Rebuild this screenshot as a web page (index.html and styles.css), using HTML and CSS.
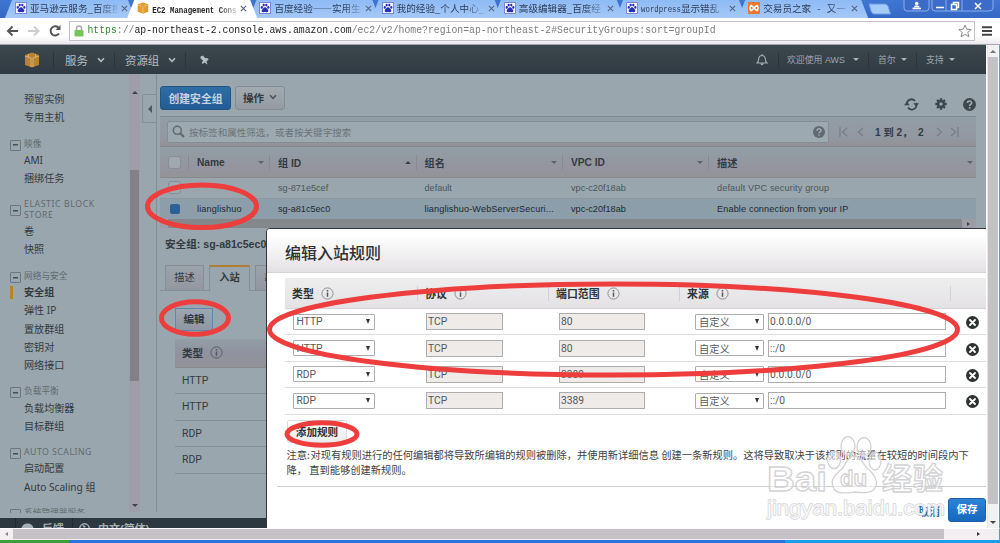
FILE: index.html
```html
<!DOCTYPE html>
<html lang="zh-CN">
<head>
<meta charset="utf-8">
<title>EC2 Management Console</title>
<link rel="stylesheet" href="styles.css">
</head>
<body>
<svg class="defs" width="0" height="0">
  <symbol id="paw" viewBox="0 0 12 12"><rect width="12" height="12" fill="#7f86d8"/><rect x="1" y="1" width="10" height="10" fill="#f4f6ff"/><g fill="#2530b8"><ellipse cx="2.8" cy="5.4" rx="1.1" ry="1.4"/><ellipse cx="4.7" cy="3.1" rx="1.1" ry="1.4"/><ellipse cx="7.3" cy="3.1" rx="1.1" ry="1.4"/><ellipse cx="9.3" cy="5.4" rx="1.1" ry="1.4"/><path d="M6 5.2C7.5 5.2 7.6 6.6 8.8 7.6C9.8 8.6 9.4 10.3 7.8 10.2L6 10L4.2 10.2C2.6 10.3 2.2 8.6 3.2 7.6C4.4 6.6 4.5 5.2 6 5.2Z"/></g></symbol>
  <symbol id="cube" viewBox="0 0 16 16"><path d="M8 .5L15 3V13L8 15.5L1 13V3Z" fill="currentColor"/><path d="M1 4.2L7 5.8V15M15 4.2L9 5.8V15M4.5 1.8V5M11.5 1.8V5" stroke="#fff" stroke-opacity=".4" fill="none" stroke-width=".9"/></symbol>
  <symbol id="info" viewBox="0 0 14 14"><circle cx="7" cy="7" r="6" fill="none" stroke="currentColor" stroke-width="1"/><path d="M7 6V10.4M7 3.3V4.8" stroke="#55585b" stroke-width="1.6"/></symbol>
  <symbol id="help" viewBox="0 0 14 14"><circle cx="7" cy="7" r="7" fill="currentColor"/><path d="M4.8 5.4C4.8 2.5 9.4 2.6 9.3 5.3C9.2 6.8 7.1 6.8 7.1 8.5M7.1 9.8V11.5" fill="none" stroke="#a2adb3" stroke-width="1.7"/></symbol>
  <symbol id="del" viewBox="0 0 14 14"><circle cx="7" cy="7" r="7" fill="#303234"/><path d="M4.3 4.3L9.7 9.7M9.7 4.3L4.3 9.7" stroke="#fff" stroke-width="2" stroke-linecap="round"/></symbol>
  <symbol id="chev" viewBox="0 0 8 6"><path d="M1 1.2L4 4.4L7 1.2" fill="none" stroke="currentColor" stroke-width="1.6"/></symbol>
</svg>

<header class="tabs">
  <div class="tab"><svg class="fav"><use href="#paw"/></svg><span class="tab-text">亚马逊云服务_百度搜</span><svg class="x" viewBox="0 0 8 8"><path d="M1 1L7 7M7 1L1 7"/></svg></div>
  <div class="tab active"><svg class="fav"><use href="#cube"/></svg><span class="tab-text"><b>EC2 Management Cons</b></span><svg class="x" viewBox="0 0 8 8"><path d="M1 1L7 7M7 1L1 7"/></svg></div>
  <div class="tab"><svg class="fav"><use href="#paw"/></svg><span class="tab-text">百度经验——实用生</span><svg class="x" viewBox="0 0 8 8"><path d="M1 1L7 7M7 1L1 7"/></svg></div>
  <div class="tab"><svg class="fav"><use href="#paw"/></svg><span class="tab-text">我的经验_个人中心_</span><svg class="x" viewBox="0 0 8 8"><path d="M1 1L7 7M7 1L1 7"/></svg></div>
  <div class="tab"><svg class="fav"><use href="#paw"/></svg><span class="tab-text">高级编辑器_百度经</span><svg class="x" viewBox="0 0 8 8"><path d="M1 1L7 7M7 1L1 7"/></svg></div>
  <div class="tab"><svg class="fav"><use href="#paw"/></svg><span class="tab-text"><i>wordpress</i>显示错乱</span><svg class="x" viewBox="0 0 8 8"><path d="M1 1L7 7M7 1L1 7"/></svg></div>
  <div class="tab"><svg class="fav" viewBox="0 0 12 12"><rect width="12" height="12" rx="1" fill="#e8762f"/><path d="M3 3L9 9M9 3L3 9M3 3C1.5 6 1.5 6 3 9M9 3C10.5 6 10.5 6 9 9" stroke="#fff" stroke-width="1.6" fill="none"/></svg><span class="tab-text wide">交易员之家 - 又一</span><svg class="x" viewBox="0 0 8 8"><path d="M1 1L7 7M7 1L1 7"/></svg></div>
  <svg class="newtab" viewBox="0 0 24 12"><path d="M1 1H17Q19 1 20 3L22.500 11H6Q4 11 3 8Z" fill="#a5cbf8" stroke="#6b9be6"/></svg>
  <svg class="winbtns" viewBox="0 0 92 14"><path d="M1 0V8Q1 11 4 11H23Q26 11 26 8V0M29 0V8Q29 11 32 11H86Q90 11 90 8V0M43 0V11M59 0V11" fill="#3d6bc9" stroke="#8badea"/><g stroke="#fff" fill="none" stroke-width="1.5"><path d="M9.500 8.500H18M33 7.500H41M72 3L78 9M78 3L72 9"/><path d="M48.500 4.500H53.500V9.500H48.500ZM50.500 4V2.500H55.500V7.500H54"/></g><circle cx="13.700" cy="3.500" r="1.800" fill="#fff"/><path d="M10.500 7.500H17L15.500 5.500H12Z" fill="#fff"/></svg>
</header>

<div class="toolbar">
  <svg class="nav" viewBox="0 0 64 20"><g fill="none" stroke-width="2"><path d="M18 10H8M12.500 5.500L8 10L12.500 14.500" stroke="#555"/><path d="M28 10H38M34 5.500L38.500 10L34 14.500" stroke="#cfcdd2"/><path d="M59 12.500A4.600 4.600 0 1 1 58.800 7" stroke="#555"/></g><path d="M60.500 4V9H55.500Z" fill="#555"/></svg>
  <div class="omnibox">
    <svg class="lock" viewBox="0 0 10 12"><path d="M2.500 6V3.500Q2.500 1 5 1T7.500 3.500V6" fill="none" stroke="#a8adab" stroke-width="1.500"/><rect x=".5" y="5" width="9" height="6.500" rx="1" fill="#76c65d"/></svg>
    <span class="url"><em>https</em>://<strong>ap-northeast-2.console.aws.amazon.com</strong>/ec2/v2/home?region=ap-northeast-2#SecurityGroups:sort=groupId</span>
    <svg class="star" viewBox="0 0 14 14"><path d="M7 1L8.700 5.200L13.200 5.500L9.800 8.400L10.900 12.800L7 10.400L3.100 12.800L4.200 8.400L.8 5.500L5.300 5.200Z" fill="#fff" stroke="#8a8a8a"/></svg>
  </div>
  <svg class="menu" viewBox="0 0 10 10"><path d="M0 1.200H10M0 5H10M0 8.800H10" stroke="#444" stroke-width="2"/></svg>
</div>

<div class="view">
  <div class="page">
    <nav class="aws">
      <svg class="logo"><use href="#cube"/></svg>
      <div class="ni n1">服务 <svg><use href="#chev"/></svg></div>
      <div class="ni n2">资源组 <svg><use href="#chev"/></svg></div>
      <div class="ni n3"><svg class="pin" viewBox="0 0 10 10"><path d="M1.500 1.500L4 .5L6 3L9 3.200L9.500 5L7.500 6L8.500 9.500L5.500 7.500L3.800 9L2.800 7.800L4 5.500L1.500 3.500Z" fill="#b4bdc3"/></svg></div>
      <svg class="bell" viewBox="0 0 12 13"><path d="M1 10H11Q9.500 9 9.300 6Q9 2.500 6 2.500T2.700 6Q2.500 9 1 10ZM4.800 10.500Q6 13 7.200 10.500M6 1V2.500" fill="none" stroke="#a3acb2" stroke-width="1.100"/></svg>
      <div class="ni s n4">欢迎使用 AWS<i class="dn"></i></div>
      <div class="ni s n5">首尔<i class="dn"></i></div>
      <div class="ni s n6">支持<i class="dn"></i></div>
    </nav>
    <div class="body">
      <aside class="side">
        <div class="si">预留实例</div><div class="si">专用主机</div>
        <div class="sh">映像</div>
        <div class="si">AMI</div><div class="si">捆绑任务</div>
        <div class="sh two">ELASTIC BLOCK<br>STORE</div>
        <div class="si">卷</div><div class="si">快照</div>
        <div class="sh">网络与安全</div>
        <div class="si cur">安全组</div><div class="si">弹性 IP</div><div class="si">置放群组</div><div class="si">密钥对</div><div class="si">网络接口</div>
        <div class="sh">负载平衡</div>
        <div class="si">负载均衡器</div><div class="si">目标群组</div>
        <div class="sh lat">AUTO SCALING</div>
        <div class="si">启动配置</div><div class="si">Auto Scaling 组</div>
        <div class="sh last">系统管理器服务</div>
      </aside>
      <div class="sbar"><i class="up"></i><div class="thumb"></div><i class="dn"></i></div>
      <div class="gutter"><div class="fold"><i></i></div></div>
      <main class="main">
        <div class="actions">
          <div class="btn blue create">创建安全组</div>
          <div class="btn ops">操作 <svg class="opchev"><use href="#chev"/></svg></div>
          <div class="tools">
            <svg width="15" height="14" viewBox="0 0 15 14"><path d="M3 8A4.600 4.600 0 0 1 11 4M12 6A4.600 4.600 0 0 1 4 10.500" fill="none" stroke="#3d474d" stroke-width="1.800"/><path d="M0 8.200L2.800 4.800L5.800 8.200ZM9.200 6.200L12.200 9.600L15 6.200Z" fill="#3d474d"/></svg>
            <svg width="12" height="12" viewBox="0 0 12 12"><circle cx="6" cy="6" r="3" fill="none" stroke="#3d474d" stroke-width="2.600"/><path d="M6 .3V2M6 10V11.700M.3 6H2M10 6H11.700M2 2L3.200 3.200M8.800 8.800L10 10M10 2L8.800 3.200M2 10L3.200 8.800" stroke="#3d474d" stroke-width="2.400"/></svg>
            <svg class="hb" width="13" height="13"><use href="#help"/></svg>
          </div>
        </div>
        <div class="filter">
          <div class="search"><svg class="mag" viewBox="0 0 13 13"><circle cx="5.300" cy="5.300" r="4" fill="none" stroke="#616b71" stroke-width="1.600"/><path d="M8.300 8.300L12 12" stroke="#616b71" stroke-width="2.400"/></svg><span>按标签和属性筛选，或者按关键字搜索</span><svg class="hs" width="12" height="12"><use href="#help"/></svg></div>
          <svg class="pg" viewBox="0 0 24 10"><path d="M1 0V10M8 1L3.500 5L8 9M24 1L19.500 5L24 9" fill="none" stroke="#737e85" stroke-width="1.200"/></svg>
          <span class="count">1 到 2，&nbsp; 2</span>
          <svg class="pg" viewBox="0 0 24 10"><path d="M1 1L5.500 5L1 9M15 1L19.500 5L15 9M22 0V10" fill="none" stroke="#737e85" stroke-width="1.200"/></svg>
        </div>
        <div class="grid gh"><div><i class="cb"></i></div><div>Name<i class="dn"></i></div><div>组 ID<i class="up"></i></div><div>组名<i class="dn"></i></div><div>VPC ID<i class="dn"></i></div><div>描述<i class="dn"></i></div></div>
        <div class="grid gr"><div><i class="cb"></i></div><div></div><div>sg-871e5cef</div><div>default</div><div>vpc-c20f18ab</div><div class="wide">default VPC security group</div></div>
        <div class="grid gr sel"><div><i class="cb on"></i></div><div class="wide">lianglishuo</div><div>sg-a81c5ec0</div><div class="wide">lianglishuo-WebServerSecuri...</div><div>vpc-c20f18ab</div><div class="wide">Enable connection from your IP</div></div>
        <div class="gscroll"><div></div><i></i></div>
        <div class="title">安全组: sg-a81c5ec0</div>
        <div class="dtabs"><div class="dt">描述</div><div class="dt on">入站</div><div class="dt">出站</div></div>
        <div class="detail">
          <div class="edit">编辑</div>
          <div class="dh">类型 <svg width="13" height="13"><use href="#info"/></svg></div>
          <div class="dr">HTTP</div><div class="dr">HTTP</div><div class="dr">RDP</div><div class="dr">RDP</div>
        </div>
      </main>
    </div>
    <footer class="foot"><div><svg width="13" height="11" viewBox="0 0 13 11"><ellipse cx="6.500" cy="5.500" rx="6" ry="5" fill="#a5afb6"/></svg>反馈</div><div><svg width="11" height="11" viewBox="0 0 11 11"><circle cx="5.500" cy="5.500" r="4.700" fill="none" stroke="#a5afb6" stroke-width="1.500"/><path d="M3 2L7 3L5 5Z" fill="#a5afb6"/></svg>中文(简体)</div></footer>

    <section class="modal">
      <h1>编辑入站规则</h1>
      <div class="rules">
        <div class="rule rh"><div>类型 <svg><use href="#info"/></svg></div><div>协议 <svg><use href="#info"/></svg></div><div>端口范围 <svg><use href="#info"/></svg></div><div>来源 <svg><use href="#info"/></svg></div><div></div></div>
        <div class="rule"><div><span class="sel1">HTTP<i></i></span></div><div><span class="ro">TCP</span></div><div><span class="ro port">80</span></div><div><span class="sel1 src">自定义<i></i></span><span class="in">0.0.0.0/0</span></div><div><svg><use href="#del"/></svg></div></div>
        <div class="rule"><div><span class="sel1">HTTP<i></i></span></div><div><span class="ro">TCP</span></div><div><span class="ro port">80</span></div><div><span class="sel1 src">自定义<i></i></span><span class="in">::/0</span></div><div><svg><use href="#del"/></svg></div></div>
        <div class="rule"><div><span class="sel1">RDP<i></i></span></div><div><span class="ro">TCP</span></div><div><span class="ro port">3389</span></div><div><span class="sel1 src">自定义<i></i></span><span class="in">0.0.0.0/0</span></div><div><svg><use href="#del"/></svg></div></div>
        <div class="rule"><div><span class="sel1">RDP<i></i></span></div><div><span class="ro">TCP</span></div><div><span class="ro port">3389</span></div><div><span class="sel1 src">自定义<i></i></span><span class="in">::/0</span></div><div><svg><use href="#del"/></svg></div></div>
      </div>
      <div class="add">添加规则</div>
      <p class="note"><span class="lead">注意:</span>对现有规则进行的任何编辑都将导致所编辑的规则被删除，并使用新详细信息 创建一条新规则。这将导致取决于该规则的流量在较短的时间段内下<br>降， 直到能够创建新规则。</p>
      <div class="mfoot"><span class="cancel">取消</span><span class="btn blue save">保存</span></div>
    </section>
  </div>
  <div class="vscroll"><i class="up"></i><div></div><i class="dn"></i></div>
</div>
<div class="hscroll"><i class="l"></i><div></div><i class="r"></i></div>
<div class="taskbar"><div class="start"></div><div class="tasks"></div><div class="tray"></div></div>

<svg class="overlay" viewBox="0 0 1000 543">
  <g fill="#fff" fill-opacity=".5" stroke="#d3d3d5" stroke-width="1.300" stroke-linejoin="round" font-family="Liberation Sans, Noto Sans CJK SC, sans-serif">
    <ellipse cx="848" cy="446" rx="7" ry="9.500"/><ellipse cx="864" cy="447" rx="7" ry="9.500"/><ellipse cx="834" cy="460" rx="6.500" ry="8.500"/><ellipse cx="875" cy="461" rx="6" ry="9"/>
    <path d="M854 456C861 456 862 463 867 468C874 474 878 480 876 486C873 494 864 493 855 492C846 493 836 495 833 487C830 479 836 474 842 469C846 464 848 456 854 456Z"/>
    <text x="767" y="491" font-size="35" font-weight="bold" textLength="60" lengthAdjust="spacingAndGlyphs">Bai</text>
    <text x="840" y="486" font-size="22" font-weight="bold" textLength="27" lengthAdjust="spacingAndGlyphs">du</text>
    <text x="882" y="489" font-size="30" font-weight="bold" textLength="61">经验</text>
    <text x="767" y="515" font-size="20.500" textLength="178" lengthAdjust="spacingAndGlyphs" paint-order="stroke" fill-opacity=".8">jingyan.baidu.com</text>
  </g>
  <g fill="none" stroke="#ee3d3d" stroke-width="5">
    <ellipse cx="202" cy="206.300" rx="54.500" ry="21.300"/>
    <ellipse cx="195" cy="318" rx="33.500" ry="16.300"/>
    <ellipse cx="613.500" cy="329.500" rx="344" ry="45.500"/>
    <ellipse cx="322" cy="434" rx="35" ry="11.300"/>
  </g>
</svg>
</body>
</html>
```
FILE: styles.css
```css
* { box-sizing: border-box; }
body {
  margin: 0; width: 1000px; height: 543px; overflow: hidden; position: relative;
  display: flex; flex-direction: column; background: #fff;
  font-family: "Liberation Sans", "Noto Sans CJK SC", sans-serif; font-size: 10px; color: #333b40;
}
svg { flex: none; display: block; }
i, em { font-style: normal; }
.defs { position: absolute; }
.up, .dn { width: 0; height: 0; border: 3px solid transparent; flex: none; }
.dn { border-top: 3px solid #59636a; border-bottom: 0; }
.up { border-bottom: 3px solid #39434a; border-top: 0; }

/* browser chrome */
.tabs { height: 18px; flex: none; display: flex; background: linear-gradient(#3f76d2, #3668c6); padding-left: 5px; }
.tab {
  width: 130px; margin-right: -7.8px; height: 18px; flex: none; display: flex; align-items: center;
  padding: 0 10px 2px 10px; background: linear-gradient(#8ebaf5, #a5c9f7);
  clip-path: polygon(7px 0, 123px 0, 130px 100%, 0 100%);
  font: 9.6px "Noto Sans CJK SC", sans-serif; color: #2c3d58;
}
.tab.active { background: #fff; color: #222; position: relative; z-index: 1; }
.fav { width: 12px; height: 12px; color: #e29a2b; }
.tab-text { width: 87px; margin-left: 3px; white-space: nowrap; -webkit-mask-image: linear-gradient(90deg, #000 78%, rgba(0, 0, 0, .2)); }
.tab-text b { font: bold 7.4px "Liberation Mono", monospace; display: inline-block; transform: scaleY(1.25); }
.tab-text i { font: 7.4px "Liberation Mono", monospace; display: inline-block; transform: scaleY(1.2); }
.tab-text.wide { word-spacing: 4px; }
.x { width: 7px; height: 7px; margin-left: 4px; stroke: #53647e; stroke-width: 1.2; }
.newtab { width: 24px; height: 12px; margin: 3px 0 0 8px; }
.winbtns { width: 92px; height: 14px; margin-left: 11px; }
.toolbar { height: 27px; flex: none; display: flex; align-items: center; background: linear-gradient(#fff 70%, #ece8ee); border-bottom: 1px solid #a7a4ac; padding-bottom: 1px; }
.nav { width: 64px; height: 20px; }
.omnibox { width: 906px; height: 20px; margin-left: 5px; border: 1px solid #c4c2c8; background: #fff; display: flex; align-items: center; padding-left: 4px; }
.lock { width: 10px; height: 12px; }
.url { font: 9.79px "Liberation Mono", monospace; color: #7c7c7c; width: 629px; margin-left: 3.5px; white-space: nowrap; transform: scaleY(1.15); }
.url em { color: #2d8c35; }
.url strong { font-weight: normal; color: #1b1b1b; }
.star { width: 14px; height: 14px; margin-left: auto; margin-right: 2px; }
.menu { width: 10px; height: 10px; margin-left: 7px; }
.view { height: 483px; flex: none; display: flex; border-right: 1px solid #2bb3c4; }
.page { width: 986px; height: 483px; position: relative; overflow: hidden; display: flex; flex-direction: column; background: #9aa6ad; }

/* console navigation */
.aws { height: 29px; flex: none; background: linear-gradient(#3c474e, #303a42); display: flex; align-items: center; padding-left: 24px; color: #b4bdc3; }
.logo { width: 16px; height: 16px; color: #b9822f; }
.ni { display: flex; align-items: center; justify-content: space-between; height: 16px; border-left: 1px solid #2b343b; font-size: 11.4px; white-space: nowrap; }
.ni svg { width: 8px; height: 6px; }
.n1 { width: 61px; margin-left: 13px; padding: 0 9px 0 11px; }
.n2 { width: 71px; padding: 0 9px 0 10px; }
.n3 { width: 34px; padding-left: 13px; }
.ni .pin { width: 10px; height: 10px; }
.bell { width: 12px; height: 13px; margin-left: 537px; margin-right: 10px; }
.s { font-size: 8.9px; color: #9ca6ac; }
.s .dn { border-top-color: #a9b2b8; }
.n4 { width: 90px; padding: 0 9px 0 8px; }
.n5 { width: 48px; padding: 0 9px; }
.n6 { width: 48px; padding: 0 9px; }

/* side menu */
.body { height: 439px; flex: none; display: flex; overflow: hidden; }
.side { width: 129px; padding: 16px 0 0 24px; overflow: hidden; font-family: "Noto Sans", "Noto Sans CJK SC", sans-serif; }
.si { height: 18.3px; line-height: 18.3px; font-size: 10.1px; white-space: nowrap; position: relative; }
.cur { font-weight: bold; }
.cur::before { content: ""; position: absolute; left: -14px; top: 3px; width: 3px; height: 13px; background: #b8822e; }
.sh { padding-top: 11px; height: 24.2px; line-height: 13.2px; font-size: 8.7px; color: #5f6a70; position: relative; white-space: nowrap; }
.sh.two { height: 34.8px; padding-top: 12px; line-height: 10.8px; letter-spacing: .6px; }
.sh.lat { letter-spacing: .5px; }
.sh::before { content: ""; position: absolute; left: -14px; top: 13px; width: 9px; height: 9px; border: 1px solid #6c777d; border-radius: 1px; background: linear-gradient(#454f55, #454f55) center / 5px 1.5px no-repeat; }
.sh.two::before { top: 18px; }
.sbar { width: 11px; height: 438px; background: #9e9da9; display: flex; flex-direction: column; align-items: center; padding: 17px 0 5px; }
.sbar .thumb { width: 9px; height: 211px; background: #828187; margin-top: 76px; }
.sbar .dn { margin-top: auto; border-top-color: #39434a; }
.gutter { width: 17px; height: 438px; border-right: 1px solid #838f96; padding: 20px 0 0 2px; }
.fold { width: 15px; height: 29px; border: 1px solid #838f96; border-right: 0; border-radius: 2px 0 0 2px; display: flex; align-items: center; justify-content: center; }
.fold i { border: 4px solid transparent; border-right-color: #4d575d; border-left: 0; }

/* main panel */
.main { width: 829px; padding-left: 3px; }
.actions { height: 42px; padding: 12px 2px 0 0; display: flex; }
.btn { display: flex; align-items: center; justify-content: center; border-radius: 3px; font-weight: bold; }
.blue { background: linear-gradient(#2d6da5, #225c96); color: #c5d4e1; border: 1px solid #255480; }
.create { width: 71px; height: 24px; font-size: 10.8px; padding-bottom: 1px; }
.ops { width: 50px; height: 24px; margin-left: 4px; border: 1px solid #838c93; background: linear-gradient(#a2abb1, #959aa2); font-size: 10.6px; gap: 5px; padding-bottom: 2px; }
.opchev { width: 8px; height: 6px; color: #4b555b; }
.tools { margin-left: auto; display: flex; align-items: center; gap: 16px; padding: 12px 0 0; margin-right: 8px; height: 24px; }
.hb { color: #3d474d; }
.filter { width: 816px; height: 31px; display: flex; align-items: center; padding-left: 7px; background: linear-gradient(#929ea5, #9398a2 60%, #929398); border-top: 1px solid #7e8a91; border-bottom: 1px solid #7f878e; }
.search { width: 662px; height: 22px; background: #9da9b0; border: 1px solid #838f96; border-radius: 2px; display: flex; align-items: center; padding: 0 3px 0 4px; color: #68737a; font-size: 9.55px; }
.mag { width: 13px; height: 13px; margin-right: 4px; }
.hs { color: #606a70; margin-left: auto; }
.pg { width: 24px; height: 10px; margin: 0 10px; }
.count { width: 51px; padding-left: 2px; font: bold 10.2px "Liberation Sans", "Noto Sans CJK SC", sans-serif; white-space: nowrap; }
.pg:last-child { margin-left: 12px; }
.grid { width: 816px; display: grid; grid-template-columns: 29px 81px 146.5px 146.5px 146px 1fr; align-items: center; }
.grid > div { display: flex; align-items: center; white-space: nowrap; padding-left: 8px; }
.gh { height: 31px; background: linear-gradient(#929ea5, #9495a0 60%, #939497); border-bottom: 1px solid #878b90; font-weight: bold; font-size: 10.2px; }
.gh > div { height: 15px; justify-content: space-between; padding-right: 5px; border-right: 1px solid #858c94; }
.gh > div:last-child { border: 0; padding-right: 3px; }
.gr { height: 20.5px; font-size: 9.15px; color: #4c565c; border-bottom: 1px solid #8c979e; }
.gr .wide { letter-spacing: .14px; }
.sel { background: #8b9ea9; color: #1f2a31; border: 0; }
.cb { width: 13px; height: 13px; border: 1px solid #858f97; border-radius: 3px; background: #a0a9b0; }
.cb.on { width: 10px; height: 10px; margin-left: 2px; border: 1px solid #35618f; background: #2b6199; border-radius: 2px; }
.gscroll { width: 816px; height: 9px; display: flex; align-items: center; padding-left: 8px; background: #9e9da5; }
.gscroll div { width: 794px; height: 9px; background: #85888b; }
.gscroll i { border: 2.5px solid transparent; border-left: 3px solid #39434a; border-right: 0; margin-left: 5px; }
.title { height: 37px; padding: 5px 0 0 5px; line-height: 22px; font-weight: bold; font-size: 10.6px; white-space: nowrap; }
.dtabs { width: 816px; height: 26px; display: flex; gap: 5px; padding-left: 5px; border-bottom: 1px solid #838f96; }
.dt { width: 39px; height: 25px; line-height: 23px; text-align: center; border: 1px solid #858e96; border-bottom: 0; background: linear-gradient(#9aa3ab, #9397a0); font-size: 10.2px; }
.dt.on { width: 41px; height: 26px; line-height: 22px; border-top: 2px solid #b08032; background: #9aa6ad; font-weight: bold; margin-bottom: -1px; }
.detail { padding: 17px 0 0 15px; }
.edit { width: 38px; height: 23px; border: 1px solid #6187ad; background: linear-gradient(#9ca7b1, #8f97a2); display: flex; align-items: center; justify-content: center; font-weight: bold; font-size: 10.6px; padding-bottom: 3px; }
.dh { height: 29px; margin-top: 8px; display: flex; align-items: center; gap: 7px; padding: 0 0 2px 7px; background: linear-gradient(#929ea5, #9192a0 50%, #929397); font-weight: bold; font-size: 10.6px; border-bottom: 1px solid #868b90; }
.dh svg { color: #515b61; }
.dr { padding-left: 7px; height: 26.4px; font: 10.4px/26.4px Roboto, sans-serif; border-bottom: 1px solid #838f96; }
.foot { height: 15px; margin-top: 5px; flex: none; display: flex; background: #2c373f; color: #a5afb6; font-size: 11px; font-weight: bold; }
.foot > div { height: 18px; display: flex; align-items: center; gap: 8px; border-left: 1px solid #202a31; width: 57px; padding: 2px 0 0 5px; white-space: nowrap; }
.foot > div:first-child { margin-left: 15px; }
.foot > div + div { width: 200px; padding-left: 6px; }

/* rules dialog */
.modal { position: absolute; left: 266px; top: 183px; width: 721px; height: 306px; background: #fff; border: 1.5px solid #30383d; border-radius: 4px 0 0 0; overflow: hidden; }
.modal h1 { margin: 0; height: 44px; padding: 3px 0 0 18px; line-height: 40px; font-size: 16px; font-weight: 500; font-family: "Noto Sans CJK SC", sans-serif; background: linear-gradient(#fff 15%, #e4e1e4); border-bottom: 1px solid #d5d3d5; color: #2f3133; }
.rules { margin: 5px 0 0 18px; }
.rule { height: 26.4px; display: grid; grid-template-columns: 133px 131px 131px 271px 1fr; align-items: center; border-bottom: 1px solid #dedede; color: #55585a; font: 10.3px Roboto, "Noto Sans CJK SC", sans-serif; }
.rule > div { display: flex; align-items: center; padding-left: 7px; }
.rule svg { width: 13px; height: 13px; margin: 2px 0 0 8px; }
.rh { height: 31px; background: linear-gradient(#ededee, #e4e2e5); border-bottom: 1px solid #d6d3d5; font: bold 10.9px "Noto Sans CJK SC", sans-serif; color: #303335; }
.rh > div { border-right: 1px solid #d2d0d2; height: 15px; }
.rh > div:last-child { border: 0; }
.rh svg { margin: 0 0 0 7px; color: #88898b; }
.sel1, .ro, .in { height: 17px; display: flex; align-items: center; border: 1px solid #adadad; padding-left: 2px; background: #fff; white-space: nowrap; }
.sel1 { width: 82px; height: 16px; padding: 0 4px 0 3px; justify-content: space-between; border-radius: 1px; margin-left: .5px; }
.sel1 i { border: 2.5px solid transparent; border-top: 5px solid #333; border-bottom: 0; }
.ro { width: 77px; background: #eeebe8; margin-left: 1px; padding-left: 1px; }
.port { width: 86px; margin-left: 3px; }
.rule .src { width: 69px; margin-left: 8px; flex: none; }
.in { width: 178px; margin-left: 4px; padding-left: 1px; flex: none; }
.add { width: 60px; height: 23px; margin: 5.5px 0 0 20px; border: 1px solid #ddd; border-radius: 2px; background: linear-gradient(#fff, #eceaec); text-align: center; font: bold 10.6px/21px "Noto Sans CJK SC", sans-serif; color: #2f3133; }
.note { margin: 3.5px 0 0 19.5px; font: 10.26px/15.5px "Noto Sans CJK SC", sans-serif; color: #404244; white-space: nowrap; }
.lead { display: inline-block; width: 24px; }
.mfoot { margin: 8px 0 0 10px; height: 42px; border-top: 1px solid #ccc; display: flex; align-items: flex-start; justify-content: flex-end; padding: 11px 0 0; }
.cancel { color: #2272a6; font: bold 10.8px/26px "Noto Sans CJK SC", sans-serif; margin-right: 8px; }
.save { width: 38px; height: 24px; font-size: 10.6px; color: #fff; background: linear-gradient(#2b83d8, #1668bd); border-color: #1c5fa8; padding-bottom: 2px; }

/* scroll bars and task bar */
.vscroll { width: 11px; margin-left: 1px; background: #f3eff3; display: flex; flex-direction: column; align-items: center; padding: 5px 0 4px; border-left: 1px solid #e9e5e9; }
.vscroll div { width: 10px; height: 447px; margin-top: 4px; background: #c6c1c6; }
.vscroll .up { border-bottom-color: #77737a; }
.vscroll .dn { margin-top: auto; border-top-color: #444; }
.hscroll { height: 12px; flex: none; background: #f3eff3; display: flex; align-items: center; padding-bottom: 1px; border-right: 1px solid #2bb3c4; border-top: 1px solid #fff; }
.hscroll i { border: 2.5px solid transparent; }
.hscroll .l { border-right: 3px solid #8a868c; border-left: 0; margin-left: 5px; }
.hscroll div { width: 931px; height: 10px; background: #c6c1c6; margin-left: 5px; }
.hscroll .r { border-left: 3px solid #333; border-right: 0; margin-left: 33px; }
.taskbar { height: 3px; flex: none; display: flex; }
.start { width: 69px; background: #3c9e3c; }
.tasks { width: 716px; background: #2a73de; }
.tray { flex: 1; background: #19a0ea; }
.overlay { position: absolute; left: 0; top: 0; width: 1000px; height: 543px; }
```
